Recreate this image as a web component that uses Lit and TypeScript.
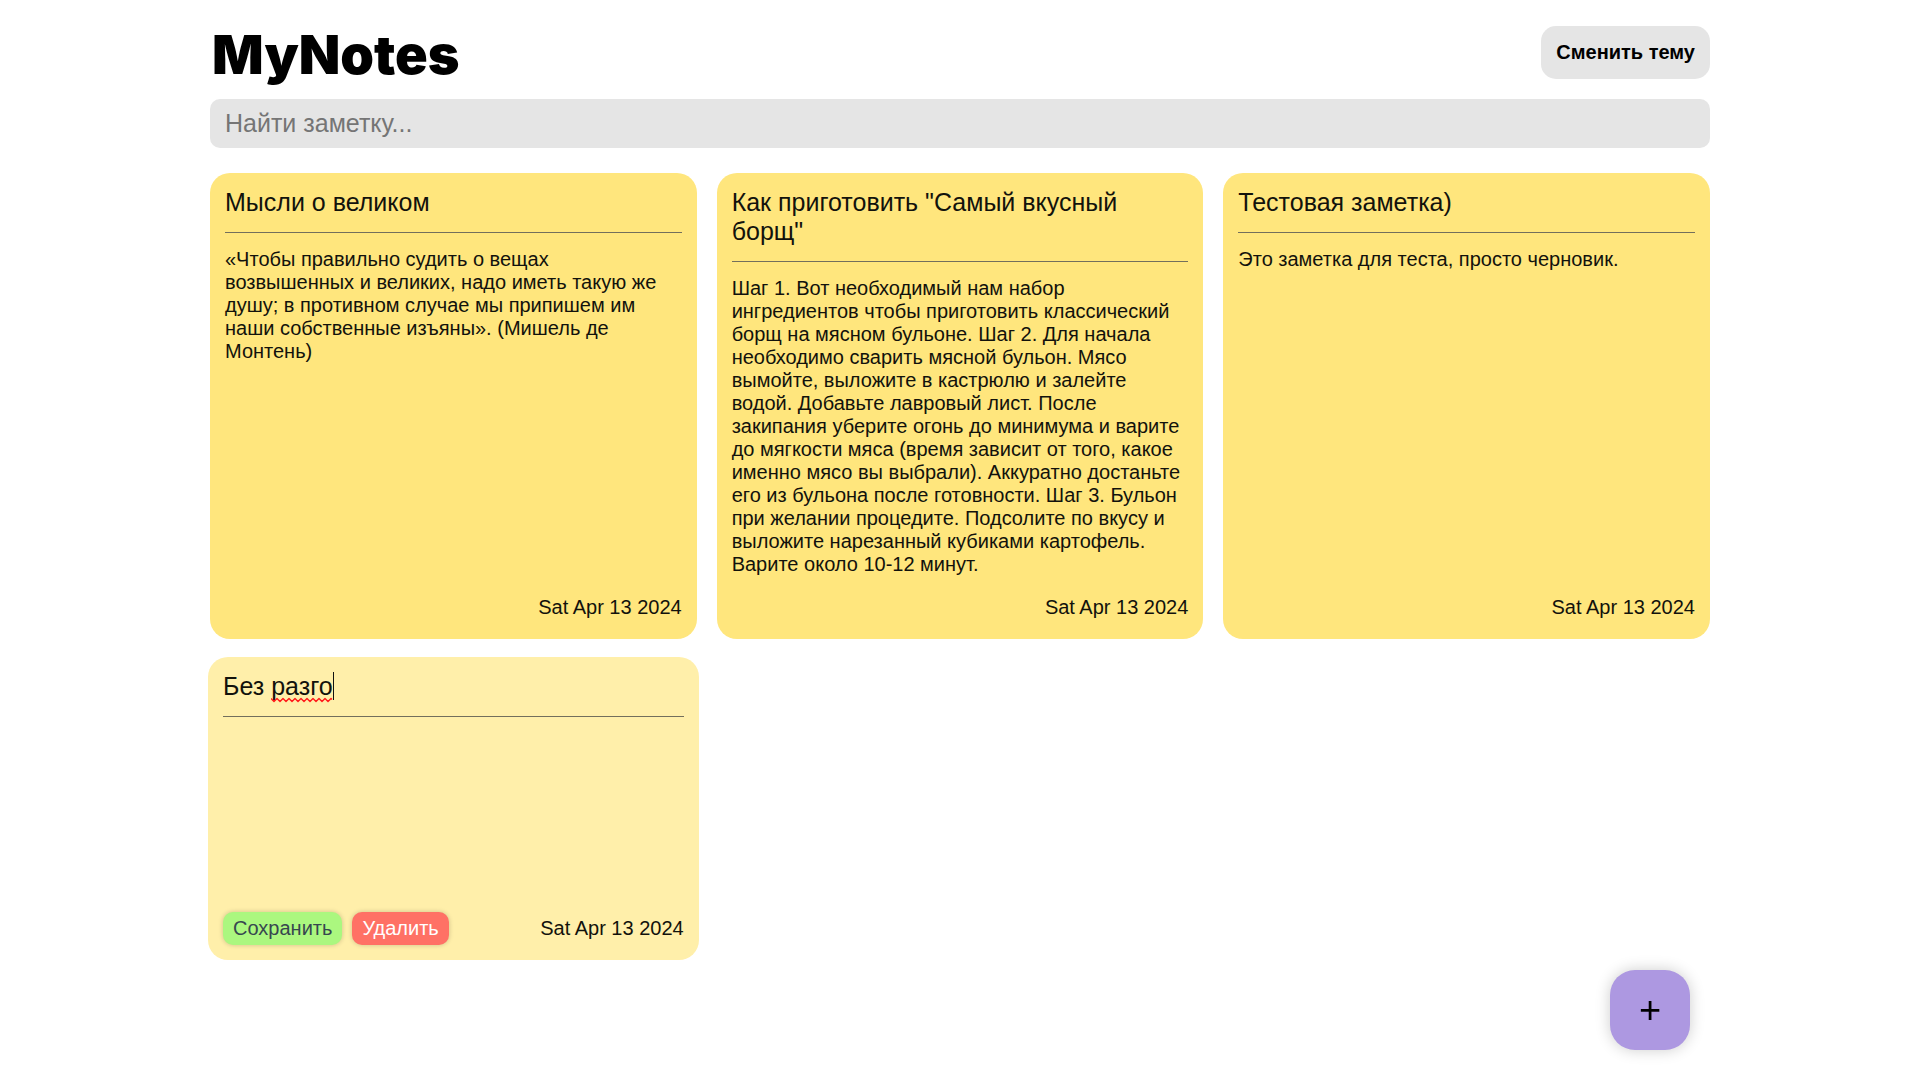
import { LitElement, html, css } from "lit";
import { customElement, property, state } from "lit/decorators.js";

interface Note {
  title: string;
  text: string;
  date: string;
}

const NOTES: Note[] = [
  {
    title: "Мысли о великом",
    text: "«Чтобы правильно судить о вещах возвышенных и великих, надо иметь такую же душу; в противном случае мы припишем им наши собственные изъяны». (Мишель де Монтень)",
    date: "Sat Apr 13 2024",
  },
  {
    title: 'Как приготовить "Самый вкусный борщ"',
    text: "Шаг 1. Вот необходимый нам набор ингредиентов чтобы приготовить классический борщ на мясном бульоне. Шаг 2. Для начала необходимо сварить мясной бульон. Мясо вымойте, выложите в кастрюлю и залейте водой. Добавьте лавровый лист. После закипания уберите огонь до минимума и варите до мягкости мяса (время зависит от того, какое именно мясо вы выбрали). Аккуратно достаньте его из бульона после готовности. Шаг 3. Бульон при желании процедите. Подсолите по вкусу и выложите нарезанный кубиками картофель. Варите около 10-12 минут.",
    date: "Sat Apr 13 2024",
  },
  {
    title: "Тестовая заметка)",
    text: "Это заметка для теста, просто черновик.",
    date: "Sat Apr 13 2024",
  },
];

const cardStyles = css`
  * {
    box-sizing: border-box;
    margin: 0;
  }
  .card {
    display: flex;
    flex-direction: column;
    height: 100%;
    padding: 15px;
    border-radius: 20px;
    background: #ffe67d;
    font-size: 20px;
    line-height: 23px;
    color: #12120c;
  }
  .title {
    font-size: 25px;
    line-height: 29px;
    font-weight: 400;
  }
  .head {
    padding-bottom: 15px;
    border-bottom: 1px solid #736f5c;
    margin-bottom: 15px;
  }
  .text {
    flex: 1;
  }
  .footer {
    display: flex;
    align-items: center;
    gap: 10px;
    margin-top: 15px;
  }
  .date {
    margin-left: auto;
    padding: 5px 0;
  }
`;

@customElement("note-card")
export class NoteCard extends LitElement {
  @property({ attribute: false }) note!: Note;

  static styles = [
    cardStyles,
    css`
      :host {
        display: block;
      }
    `,
  ];

  render() {
    return html`
      <article class="card">
        <div class="head"><h2 class="title">${this.note.title}</h2></div>
        <p class="text">${this.note.text}</p>
        <div class="footer"><time class="date">${this.note.date}</time></div>
      </article>
    `;
  }
}

@customElement("note-editor")
export class NoteEditor extends LitElement {
  @property() heading = "";
  @property() date = "";

  static styles = [
    cardStyles,
    css`
      :host {
        display: block;
      }
      .card {
        min-height: 303px;
        background: #ffefaa;
      }
      .head {
        position: relative;
        display: flex;
      }
      input,
      textarea,
      button {
        font-family: inherit;
        border: 0;
        outline: 0;
      }
      input,
      textarea {
        width: 100%;
        padding: 0;
        background: none;
        color: inherit;
      }
      input {
        height: 29px;
      }
      textarea {
        display: block;
        resize: none;
        font-size: 20px;
        line-height: 23px;
      }
      .marks {
        position: absolute;
        left: 48px;
        top: 0;
      }
      button {
        padding: 5px 10px;
        border-radius: 10px;
        font-size: 20px;
        line-height: 23px;
        box-shadow: 0 0 5px rgba(0, 0, 0, 0.2);
        cursor: pointer;
      }
      .save {
        background: #abf77f;
        color: #37474f;
      }
      .remove {
        background: #ff7165;
        color: #fff;
      }
    `,
  ];

  render() {
    return html`
      <article class="card">
        <div class="head">
          <input
            class="title"
            type="text"
            aria-label="Заголовок"
            .value=${this.heading}
          />
          <svg class="marks" width="65" height="31" viewBox="0 0 65 31" aria-hidden="true">
            <path
              d="M0 26.500l3 3 3-3 3 3 3-3 3 3 3-3 3 3 3-3 3 3 3-3 3 3 3-3 3 3 3-3 3 3 3-3 3 3 3-3 3 3 3-3 1 1"
              fill="none"
              stroke="#ff1a1a"
              stroke-width="1.400"
              stroke-linejoin="round"
            />
            <path d="M62.500 0v28" stroke="#111" stroke-width="1" />
          </svg>
        </div>
        <textarea class="text" aria-label="Текст заметки"></textarea>
        <div class="footer">
          <button class="save" type="button">Сохранить</button>
          <button class="remove" type="button">Удалить</button>
          <time class="date">${this.date}</time>
        </div>
      </article>
    `;
  }
}

@customElement("app-root")
export class AppRoot extends LitElement {
  @state() private query = "";

  static styles = css`
    :host {
      display: block;
      min-height: 100vh;
      background: #fff;
      font-family: "Liberation Sans", Arial, sans-serif;
    }
    * {
      box-sizing: border-box;
      margin: 0;
    }
    .page,
    .dock {
      width: min(1500px, 100% - 40px);
      margin: 0 auto;
    }
    .page {
      padding: 20px 0;
    }
    .header {
      display: flex;
      justify-content: space-between;
      align-items: center;
      height: 65px;
      margin-bottom: 14px;
    }
    .logo {
      padding: 4px 2px 0;
      font-family: "Arial Black", Inter, sans-serif;
      font-weight: 900;
      font-size: 54px;
      line-height: 65px;
    }
    button,
    input {
      font-family: inherit;
      border: 0;
      outline: 0;
    }
    .theme {
      padding: 15px;
      border-radius: 15px;
      background: #e5e5e5;
      color: #000;
      font-size: 20px;
      line-height: 23px;
      font-weight: 700;
    }
    .search {
      display: block;
      width: 100%;
      height: 49px;
      padding: 10px 15px;
      border-radius: 10px;
      background: #e5e5e5;
      font-size: 25px;
      line-height: 29px;
    }
    .search::placeholder {
      color: #757575;
    }
    .notes {
      display: grid;
      grid-template-columns: repeat(3, minmax(0, 1fr));
      gap: 20px;
      margin-top: 25px;
    }
    /* The note being edited spreads slightly past its grid cell. */
    .raised {
      margin: -2px;
    }
    .dock {
      position: fixed;
      inset: auto 0 30px;
      display: flex;
      justify-content: flex-end;
      padding-right: 20px;
    }
    .add {
      width: 80px;
      height: 80px;
      padding: 0;
      border-radius: 25px;
      background: #ad98e1;
      color: #000;
      font-size: 38px;
      line-height: 44px;
      box-shadow: 0 0 15px rgba(0, 0, 0, 0.2);
    }
  `;

  private onSearch(e: Event) {
    this.query = (e.target as HTMLInputElement).value.toLowerCase();
  }

  render() {
    const visible = NOTES.filter((n) =>
      (n.title + " " + n.text).toLowerCase().includes(this.query),
    );
    return html`
      <div class="page">
        <header class="header">
          <h1 class="logo">MyNotes</h1>
          <button class="theme" type="button">Сменить тему</button>
        </header>
        <input
          class="search"
          type="search"
          placeholder="Найти заметку..."
          aria-label="Найти заметку"
          @input=${this.onSearch}
        />
        <main class="notes">
          ${visible.map((n) => html`<note-card .note=${n}></note-card>`)}
          <note-editor
            class="raised"
            heading="Без разго"
            date="Sat Apr 13 2024"
          ></note-editor>
        </main>
      </div>
      <div class="dock">
        <button class="add" type="button" aria-label="Добавить заметку">+</button>
      </div>
    `;
  }
}
